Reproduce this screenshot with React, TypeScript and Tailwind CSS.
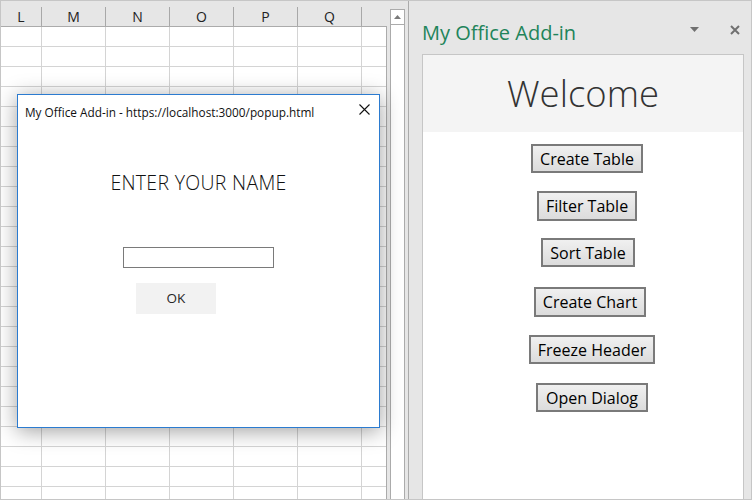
const cols = [
  { label: "L", w: "w-[41px]" },
  { label: "M", w: "w-[64px]" },
  { label: "N", w: "w-[64px]" },
  { label: "O", w: "w-[64px]" },
  { label: "P", w: "w-[64px]" },
  { label: "Q", w: "w-[64px]" },
];

const buttons = [
  { label: "Create Table", cls: "w-[112px] h-[29px] mt-[12px] ml-0" },
  { label: "Filter Table", cls: "w-[100px] h-[30px] mt-[18px] ml-0" },
  { label: "Sort Table", cls: "w-[94px] h-[29px] mt-[17px] ml-[2px]" },
  { label: "Create Chart", cls: "w-[112px] h-[30px] mt-[20px] ml-[6px]" },
  { label: "Freeze Header", cls: "w-[126px] h-[29px] mt-[18px] ml-[10px]" },
  { label: "Open Dialog", cls: "w-[112px] h-[29px] mt-[19px] ml-[10px]" },
];

function Sheet() {
  return (
    <div className="relative w-[389px] h-full flex flex-col shrink-0">
      {/* column headers */}
      <div className="h-[25px] pt-[6px] flex shrink-0">
        {cols.map((c) => (
          <div
            key={c.label}
            className={`${c.w} h-[19px] border-r border-[#a8a8a8] flex items-center justify-center text-[14px] text-[#222] leading-none shrink-0`}
          >
            {c.label}
          </div>
        ))}
      </div>
      {/* cells */}
      <div className="w-[386px] flex-1 bg-white border-t border-r border-[#ababab] overflow-hidden">
        {Array.from({ length: 24 }).map((_, r) => (
          <div key={r} className="flex h-[20px] border-b border-[#d4d4d4]">
            {cols.map((c) => (
              <div key={c.label} className={`${c.w} h-full border-r border-[#d4d4d4] shrink-0`} />
            ))}
          </div>
        ))}
      </div>

      {/* dialog window */}
      <div className="absolute left-[16px] top-[93px] w-[363px] h-[334px] bg-white border border-[#2b7bd0] shadow-[0_3px_20px_rgba(0,0,0,0.38)] flex flex-col">
        <div className="mt-[9px] pl-[7px] h-[16px] leading-[16px] text-[11.8px] text-[#111] whitespace-nowrap">
          My Office Add-in - https://localhost:3000/popup.html
        </div>
        <svg className="absolute left-[341px] top-[9px]" width="11" height="11" viewBox="0 0 11 11">
          <path d="M0.5 0.5 L10.5 10.5 M10.5 0.5 L0.5 10.5" stroke="#111" strokeWidth="1.1" />
        </svg>
        <div className="mt-[49px] text-center text-[19.5px] leading-[28px] font-light text-[#111] tracking-[0.3px]">
          ENTER YOUR NAME
        </div>
        <div className="mt-[50px] mx-auto w-[151px] h-[21px] border border-[#7a7a7a] bg-white shrink-0" />
        <button className="mt-[15px] ml-[118px] w-[80px] h-[31px] bg-[#f2f2f2] text-[13.5px] text-[#262626] shrink-0">
          OK
        </button>
      </div>
    </div>
  );
}

function ScrollBar() {
  return (
    <div className="w-[15px] h-full pt-[8px] flex flex-col shrink-0">
      <div className="flex-1 border-x border-t border-[#ababab] bg-white flex flex-col">
        <div className="h-[15px] border-b border-[#ababab] flex items-center justify-center">
          <svg width="7" height="4" viewBox="0 0 7 4">
            <path d="M0 4 L3.5 0 L7 4 Z" fill="#7a7a7a" />
          </svg>
        </div>
      </div>
    </div>
  );
}

function TaskPane() {
  return (
    <div className="flex-1 h-full border-l border-[#ababab] flex flex-col">
      <div className="h-[53px] pt-[18px] pl-[13px] pr-[11px] flex items-start shrink-0">
        <div className="text-[20px] leading-[28px] text-[#21845a] whitespace-nowrap">My Office Add-in</div>
        <svg className="ml-auto mt-[8px]" width="9" height="5" viewBox="0 0 9 5">
          <path d="M0 0 L9 0 L4.5 5 Z" fill="#707070" />
        </svg>
        <svg className="ml-[31px] mt-[6px]" width="10" height="10" viewBox="0 0 10 10">
          <path d="M1 1 L9 9 M9 1 L1 9" stroke="#707070" strokeWidth="2" />
        </svg>
      </div>
      <div className="flex-1 ml-[13px] mr-[7px] border-x border-t border-[#c6c6c6] bg-white flex flex-col">
        <div className="h-[77px] bg-[#f4f4f4] flex items-center justify-center text-[36.5px] leading-[77px] font-light text-[#333] shrink-0">
          Welcome
        </div>
        <div className="flex flex-col items-center pl-[8px]">
          {buttons.map((b) => (
            <button
              key={b.label}
              className={`${b.cls} border-2 border-[#7a7a7a] bg-linear-to-b from-[#f0f0f0] to-[#dcdcdc] text-[16px] leading-none text-black whitespace-nowrap`}
            >
              {b.label}
            </button>
          ))}
        </div>
      </div>
    </div>
  );
}

export default function App() {
  return (
    <div className="w-[752px] h-[500px] border border-[#c6c6c6] bg-[#e6e6e6] flex overflow-hidden font-['Open_Sans',sans-serif]">
      <Sheet />
      <ScrollBar />
      <div className="w-[3px] shrink-0" />
      <TaskPane />
    </div>
  );
}
